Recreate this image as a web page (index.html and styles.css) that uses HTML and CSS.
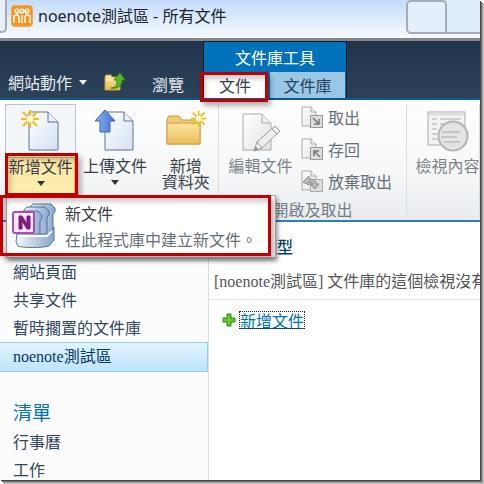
FILE: index.html
```html
<!DOCTYPE html>
<html lang="zh-Hant">
<head>
<meta charset="utf-8">
<title>noenote測試區 - 所有文件</title>
<link rel="stylesheet" href="styles.css">
</head>
<body>
<svg width="0" height="0" class="defs" aria-hidden="true">
  <defs>
    <linearGradient id="paper" x1="0" y1="0" x2="1" y2="1"><stop offset="0" stop-color="#fff"/><stop offset="1" stop-color="#d3e1f4"/></linearGradient>
    <linearGradient id="gray" x1="0" y1="0" x2="1" y2="1"><stop offset="0" stop-color="#fff"/><stop offset="1" stop-color="#e2e2e2"/></linearGradient>
    <linearGradient id="gold" x1="0" y1="0" x2="0" y2="1"><stop offset="0" stop-color="#fbe6a2"/><stop offset="1" stop-color="#e9bd55"/></linearGradient>
    <linearGradient id="blue" x1="0" y1="0" x2="1" y2="0"><stop offset="0" stop-color="#8fb4f4"/><stop offset="1" stop-color="#3f6fd0"/></linearGradient>
    <linearGradient id="steel" x1="0" y1="0" x2="1" y2="0"><stop offset="0" stop-color="#f2f7fd"/><stop offset="1" stop-color="#86a6cc"/></linearGradient>
    <g id="spark"><path d="M9 0v18M0 9h18M2 2l14 14M16 2L2 16" stroke="#f3bd1b" stroke-width="2.2"/><circle cx="9" cy="9" r="3.4" fill="#fff9cf"/></g>
    <g id="smallpage"><path d="M1 1h9l5 5v14H1z" fill="url(#gray)" stroke="#aaa"/><path d="M10 1v5h5" fill="#eee" stroke="#aaa"/></g>
  </defs>
</svg>
<div class="window">
  <header class="browser-tabs">
    <span class="prev-tab"></span>
    <div class="page-tab">
      <svg class="favicon" width="22" height="22" viewBox="0 0 22 22"><rect x=".5" y=".5" width="21" height="21" rx="3" fill="#f7941d" stroke="#f9a849"/><g fill="none" stroke="#fff" stroke-width="1.500"><circle cx="6" cy="6" r="1.800"/><circle cx="16" cy="6" r="1.800"/><circle cx="11" cy="6" r="1.800"/><path d="M3 18v-7l2-1h2l1 2v6M19 18v-7l-2-1h-2l-1 2v6M11 10v8"/></g></svg>
      <span>noenote測試區 - 所有文件</span>
    </div>
    <span class="new-tab"></span><span class="tab-rest"></span>
  </header>

  <nav class="topbar">
    <button class="site-actions">網站動作<i class="caret light"></i></button>
    <button class="up" aria-label="向上瀏覽">
      <svg width="22" height="20" viewBox="0 0 22 20"><path d="M1 5l1-2h5l1 2h8v13H1z" fill="url(#gold)" stroke="#c39a43"/><path d="M2 8h13" stroke="#fff2c8"/><path d="M7 16c5 0 6-3 6-8H10l6-7 5 7h-3c0 6-4 9-11 8z" fill="#55b72b" stroke="#2e8a18"/></svg>
    </button>
    <button class="browse">瀏覽</button>
    <div class="context">
      <div class="context-title">文件庫工具</div>
      <div class="context-tabs">
        <button class="tab active">文件</button>
        <button class="tab library">文件庫</button>
      </div>
    </div>
  </nav>

  <section class="ribbon">
    <div class="group create">
      <div class="large split">
        <button class="large-icon" aria-label="新增文件">
          <svg width="42" height="44" viewBox="0 0 42 44"><path d="M9 4h19l10 10v28H9z" fill="url(#paper)" stroke="#5b7594"/><path d="M28 4v10h10" fill="#e9f1fb" stroke="#5b7594"/><use href="#spark" x="1" y="2"/></svg>
        </button>
        <button class="large-label">新增文件<i class="caret"></i></button>
        <div class="menu">
          <button class="menu-item">
            <svg width="46" height="46" viewBox="0 0 46 46"><g fill="url(#steel)" stroke="#54739c"><path d="M18 4l3-3h18l4 4v4l-2 2v24H28V6H18z"/><path d="M12 7l3-3h18l4 4v4l-2 2v20H22V9H12z"/><path d="M8 11l3-3h15l4 4v4l-2 2v18H8z"/><path d="M5 31h31l6-7v13l-5 6c-6 2-27 2-31 0l-2-4z"/></g><path d="M7 33h28l5-5" fill="none" stroke="#fff" stroke-width="2"/><rect x="1" y="9" width="21" height="21" rx="2" fill="#f8e9f8" stroke="#ae4bb0" stroke-width="2"/><path d="M7 26V13h3l5 8v-8h3v13h-3l-5-8v8z" fill="#7d1d80" stroke="#7d1d80"/></svg>
            <span class="menu-text"><span>新文件</span><span class="desc">在此程式庫中建立新文件。</span></span>
          </button>
        </div>
      </div>
      <button class="large">
        <svg width="42" height="44" viewBox="0 0 42 44"><path d="M11 4h19l9 9v29H11z" fill="url(#paper)" stroke="#5b7594"/><path d="M30 4v9h9" fill="#e9f1fb" stroke="#5b7594"/><path d="M11 2l10 11h-5v11H6V13H1z" fill="url(#blue)" stroke="#3c62b4"/></svg>
        <span class="large-label">上傳文件<i class="caret"></i></span>
      </button>
      <button class="large folder">
        <svg width="42" height="44" viewBox="0 0 42 44"><path d="M2 11l2-3h10l3 4h18v24H2z" fill="#f2cd72" stroke="#c39540"/><path d="M2 15h33v21H2z" fill="url(#gold)" stroke="#cf9f45"/><g transform="translate(26 3) scale(.85)"><use href="#spark"/></g></svg>
        <span class="large-label">新增<br>資料夾</span>
      </button>
    </div>
    <div class="group open">
      <div class="group-body">
        <button class="large muted">
          <svg width="42" height="44" viewBox="0 0 42 44"><path d="M3 6h19l9 9v27H3z" fill="url(#gray)" stroke="#aaa"/><path d="M22 6v9h9" fill="#eee" stroke="#aaa"/><path d="M14 43l3-9 18-16 5 5-18 17z" fill="#eee" stroke="#999"/><path d="M17 34l5 6M32 21l5 5M14 43l4-2-2-2z" stroke="#999" fill="#999"/></svg>
          <span class="large-label">編輯文件</span>
        </button>
        <div class="small-list">
          <button class="small"><svg width="22" height="22" viewBox="0 0 22 22"><use href="#smallpage"/><rect x="9.500" y="9.500" width="12" height="12" fill="#ddd" stroke="#999"/><path d="M12 12l6 6m0-5v5h-5" stroke="#777" stroke-width="1.500" fill="none"/></svg>取出</button>
          <button class="small"><svg width="22" height="22" viewBox="0 0 22 22"><use href="#smallpage"/><rect x="9.500" y="9.500" width="12" height="12" fill="#ddd" stroke="#999"/><path d="M19 19l-6-6m0 5v-5h5" stroke="#777" stroke-width="1.500" fill="none"/></svg>存回</button>
          <button class="small"><svg width="22" height="22" viewBox="0 0 22 22"><use href="#smallpage"/><rect x="9.500" y="9.500" width="12" height="12" fill="#ddd" stroke="#aaa"/><path d="M2 12l6-6v3c5 0 7 2 7 5l3 0-4 5-5-5h3c0-1-1-2-4-2v3z" fill="#bbb" stroke="#888"/></svg>放棄取出</button>
        </div>
      </div>
      <div class="group-title">開啟及取出</div>
    </div>
    <div class="group view">
      <button class="large muted">
        <svg width="42" height="44" viewBox="0 0 42 44"><rect x="1" y="4" width="37" height="33" fill="#f3f3f3" stroke="#aaa"/><path d="M2 6h35" stroke="#ddd" stroke-width="3"/><path d="M5 11h5M5 16h5M5 21h5M5 26h5M5 31h5M13 11h21M13 16h21" stroke="#aaa"/><circle cx="26" cy="28" r="14.500" fill="#e2e2e2" fill-opacity=".9" stroke="#b5b5b5" stroke-width="2"/><path d="M15 24h18M14 29h16M17 34h16" stroke="#bbb" stroke-width="1.500"/></svg>
        <span class="large-label">檢視內容</span>
      </button>
    </div>
  </section>

  <div class="workspace">
    <aside class="sidebar">
      <a href="#">網站頁面</a>
      <a href="#">共享文件</a>
      <a href="#">暫時擱置的文件庫</a>
      <a href="#" class="selected">noenote測試區</a>
      <h2>清單</h2>
      <a href="#">行事曆</a>
      <a href="#">工作</a>
    </aside>
    <main>
      <h3>類型</h3>
      <p class="empty">[noenote測試區] 文件庫的這個檢視沒有</p>
      <div class="add">
        <svg width="14" height="14" viewBox="0 0 14 14"><path d="M5 1h4v4h4v4H9v4H5V9H1V5h4z" fill="#65c72d" stroke="#248815"/></svg>
        <a href="#">新增文件</a>
      </div>
    </main>
  </div>
</div>
</body>
</html>
```
FILE: styles.css
```css
* { box-sizing: border-box; }
body {
  margin: 0;
  height: 100vh;
  padding: 0 4px 4px 0;
  overflow: hidden;
  background: #fff;
  font: 16px/20px "Noto Sans CJK TC", sans-serif;
  color: #3b4149;
}
button {
  font: inherit;
  color: inherit;
  margin: 0;
  padding: 0;
  border: 0;
  background: none;
  white-space: nowrap;
}
svg { display: block; flex: none; }
.defs { position: absolute; }
.window {
  height: 100%;
  display: flex;
  flex-direction: column;
  background: #fff;
  box-shadow: 1px 1px 0 #444, 2px 2px 0 #777, 3px 3px 0 #999, 4px 4px 0 #c4c4c4;
}

/* browser tab strip */
.browser-tabs {
  flex: none;
  display: flex;
  height: 41px;
  border-bottom: 3px solid #858585;
  background: linear-gradient(#c3dcfa, #f7faff);
}
.prev-tab {
  width: 7px;
  height: 33px;
  border: 2px solid #a7abb8;
  border-width: 0 2px 2px 0;
  border-radius: 0 0 5px 0;
  background: #e6effb;
}
.page-tab {
  flex: 1;
  display: flex;
  gap: 5px;
  padding: 5px 0 0 4px;
  height: 31px;
  color: #20242c;
  font-family: "Noto Sans", "Noto Sans CJK TC", sans-serif;
  line-height: 22px;
  white-space: nowrap;
}
.new-tab {
  width: 41px;
  height: 34px;
  border: 2px solid #a7abb8;
  border-radius: 5px 5px 0 5px;
  background: #e4effb;
}
.tab-rest {
  width: 33px;
  height: 34px;
  border-bottom: 2px solid #a7abb8;
  background: #e0edfa;
}

/* site bar */
.topbar {
  flex: none;
  display: flex;
  align-items: flex-end;
  height: 59px;
  padding-left: 8px;
  border-bottom: 2px solid #0b5796;
  background: linear-gradient(#20354b, #2c4259);
  color: #e6ebf0;
}
.site-actions { display: flex; align-items: center; gap: 7px; padding-bottom: 6px; }
.up { margin-left: 17px; padding-bottom: 6px; }
.browse { width: 50px; margin-left: 17px; padding-bottom: 4px; }
.caret {
  display: block;
  border: 4px solid transparent;
  border-top: 5px solid #333;
  border-bottom: 0;
}
.caret.light { border-top-color: #e6ebf0; }
.context {
  align-self: stretch;
  margin-left: 10px;
  width: 144px;
  border: 1px solid #101d2b;
  border-bottom: 0;
  background: #0072bc;
}
.context-title { height: 30px; line-height: 30px; text-align: center; color: #fff; }
.context-tabs { display: flex; gap: 4px; height: 26px; }
.tab { flex: 1; color: #27435c; background: #9bc7e7; }
.tab.active { position: relative; flex: none; width: 62px; background: #fff; color: #3b4149; }
.tab.library { margin-right: 1px; }
.tab.active::after,
.split .large-label::after,
.menu::after {
  content: "";
  position: absolute;
  border: 3px solid #c00000;
  box-shadow: 3px 4px 5px rgba(0, 0, 0, .3), inset 3px 4px 5px rgba(0, 0, 0, .2);
  pointer-events: none;
}
.tab.active::after { z-index: 2; inset: 0 -2px -4px -4px; }

/* ribbon */
.ribbon {
  flex: none;
  display: flex;
  height: 122px;
  border-bottom: 2px solid #2e7fb3;
  background: linear-gradient(#fff, #f5f7f9 60%, #e9ecef);
}
.group { flex: none; margin: 4px 0 2px; border-right: 1px solid #d9dde2; }
.create { display: flex; width: 219px; padding-left: 5px; }
.large {
  position: relative;
  display: flex;
  flex-direction: column;
  align-items: center;
  width: 73px;
  height: 92px;
  padding-top: 4px;
}
.create .large + .large { margin-left: 3px; }
.large-label { display: flex; flex-direction: column; align-items: center; line-height: 16px; padding-top: 5px; gap: 7px; }
.split { padding: 0; border: 1px solid #b9c5d2; background: #f3f6f9; }
.split .large-icon { padding: 3px 0 5px; height: 52px; }
.split .large-label {
  position: relative;
  align-self: stretch;
  height: 38px;
  padding-top: 0;
  border: 1px solid #e7b94f;
  background: linear-gradient(#f9e5a4, #ffefae);
}
.split .large-label::after { inset: -5px -4px -2px -2px; }
.create .folder { width: 66px; margin-left: 0; }
.folder .large-label { display: block; }
.muted { color: #7d838b; }
.open { width: 188px; }
.group-body { display: flex; gap: 4px; height: 95px; padding-left: 5px; }
.small-list { display: flex; flex-direction: column; gap: 10px; padding-top: 2px; }
.small { display: flex; align-items: center; gap: 5px; height: 22px; color: #697079; }
.group-title { text-align: center; color: #777e87; }
.view { flex: 1; min-width: 0; padding-left: 4px; overflow: hidden; }

/* drop-down menu */
.menu {
  position: absolute;
  z-index: 3;
  top: 90px;
  left: 0;
  width: 270px;
  height: 63px;
  border: 1px solid #a5acb4;
  background: #fff;
  box-shadow: 2px 3px 4px rgba(0, 0, 0, .35);
}
.menu::after { inset: -1px 4px 1px -7px; }
.menu-item { display: flex; gap: 7px; padding: 7px 5px; text-align: left; }
.menu-text { display: flex; flex-direction: column; gap: 6px; }
.desc { color: #686e76; }

/* content */
.workspace { flex: 1; min-height: 0; display: flex; overflow: hidden; }
.sidebar {
  flex: none;
  width: 209px;
  padding-top: 36px;
  border-right: 1px solid #dcdee1;
  background: #fcfcfc;
}
.sidebar a {
  display: block;
  height: 28px;
  padding-left: 13px;
  line-height: 26px;
  color: #2f4761;
  text-decoration: none;
}
.sidebar .selected {
  height: 30px;
  border: 1px solid #91cdf0;
  border-left: 0;
  background: linear-gradient(#e0f3ff, #bfe4fb);
  line-height: 28px;
  color: #07395d;
}
.sidebar .selected, .empty { font-family: "Liberation Serif", "Noto Sans CJK TC", serif; }
.sidebar h2 { margin: 26px 0 2px; padding-left: 13px; font-size: 19px; line-height: 28px; font-weight: 400; color: #0072bc; }
main { flex: 1; min-width: 0; overflow: hidden; }
h3 { margin: 14px 0 16px; padding-left: 52px; font-size: 16px; line-height: 20px; font-weight: 500; color: #063f64; }
.empty { margin: 0; padding: 0 0 7px 5px; border-bottom: 1px solid #dfe1e4; white-space: nowrap; color: #555; }
.add { display: flex; align-items: center; gap: 4px; padding: 12px 0 0 13px; }
.add a { line-height: 16px; color: #0072bc; outline: 1px dotted #222; text-decoration: underline; }
```
